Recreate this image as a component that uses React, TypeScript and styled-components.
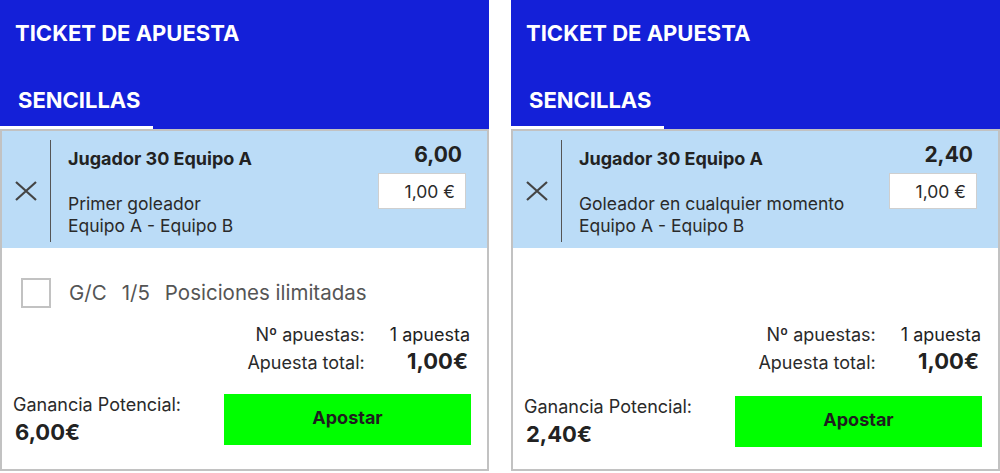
import React from "react";
import styled, { createGlobalStyle } from "styled-components";

const GlobalStyle = createGlobalStyle`
  html, body {
    margin: 0;
    padding: 0;
    background: #ffffff;
  }
  body {
    font-family: Inter, "Noto Sans", "Liberation Sans", sans-serif;
    color: #222222;
  }
  * { box-sizing: border-box; }
`;

const Page = styled.div`
  display: flex;
  gap: 22px;
  width: 1000px;
  height: 473px;
`;

const Panel = styled.section`
  width: 489px;
  display: flex;
  flex-direction: column;
`;

const Header = styled.header`
  background: #1420d8;
  display: flex;
  flex-direction: column;
  height: 129px;
`;

const Title = styled.h1`
  margin: 0;
  padding: 22px 15px 0;
  font-size: 22px;
  line-height: 22px;
  font-weight: 700;
  color: #ffffff;
`;

const Tab = styled.div`
  margin-top: 45px;
  width: 153px;
  padding: 0 0 15px 18px;
  border-bottom: 3px solid #ffffff;
  font-size: 22px;
  line-height: 22px;
  font-weight: 700;
  color: #ffffff;
`;

const Body = styled.div`
  height: 342px;
  border: 2px solid #c2c2c2;
  display: flex;
  flex-direction: column;
`;

const SelectionRow = styled.div`
  height: 117px;
  background: #bbdcf7;
  display: flex;
  flex-shrink: 0;
`;

const RemoveCell = styled.div`
  width: 48px;
  padding-top: 3px;
  display: flex;
  align-items: center;
  justify-content: center;
`;

const Divider = styled.div`
  width: 1px;
  margin: 9px 0 6px;
  background: #555555;
`;

const SelectionContent = styled.div`
  flex: 1;
  display: flex;
  justify-content: space-between;
  padding: 0 21px 0 17px;
`;

const SelectionInfo = styled.div`
  display: flex;
  flex-direction: column;
  padding-top: 17px;
`;

const PlayerName = styled.div`
  font-size: 18px;
  line-height: 22px;
  font-weight: 700;
  color: #222222;
`;

const Market = styled.div`
  margin-top: 23px;
  font-size: 17.5px;
  line-height: 22px;
  color: #2a2a2a;
`;

const EventName = styled.div`
  font-size: 17.5px;
  line-height: 22px;
  color: #2a2a2a;
`;

const OddsColumn = styled.div`
  display: flex;
  flex-direction: column;
  align-items: flex-end;
  padding-top: 12px;
`;

const Odds = styled.div`
  font-size: 21px;
  line-height: 24px;
  font-weight: 700;
  color: #222222;
  margin-right: 4px;
`;

const StakeInput = styled.input`
  margin-top: 6px;
  width: 88px;
  height: 36px;
  border: 1px solid #cfcfcf;
  background: #ffffff;
  padding: 0 10px 0 0;
  text-align: right;
  font-family: inherit;
  font-size: 17.5px;
  color: #2a2a2a;
  outline: none;
`;

const Options = styled.div`
  flex: 1;
  display: flex;
  align-items: flex-start;
  padding: 30px 0 0 19px;
  gap: 18px;
`;

const CheckBox = styled.span`
  width: 30px;
  height: 30px;
  border: 2px solid #c2c2c2;
  background: #ffffff;
  flex-shrink: 0;
`;

const OptionLabels = styled.div`
  display: flex;
  gap: 15px;
  font-size: 20.5px;
  line-height: 30px;
  color: #555555;
`;

const Spacer = styled.div`
  flex: 1;
`;

const Summary = styled.div`
  display: grid;
  grid-template-columns: auto auto;
  grid-auto-rows: 27px;
  justify-content: end;
  column-gap: 25px;
  align-items: baseline;
  padding-right: 17px;
`;

const SummaryLabel = styled.div`
  text-align: right;
  font-size: 18px;
  line-height: 27px;
  color: #2a2a2a;
`;

const SummaryValue = styled.div<{ $strong?: boolean }>`
  text-align: right;
  font-size: ${(p) => (p.$strong ? "22px" : "18px")};
  font-weight: ${(p) => (p.$strong ? 700 : 400)};
  line-height: 27px;
  color: #222222;
  padding-right: ${(p) => (p.$strong ? "2px" : "0")};
`;

const Footer = styled.div<{ $lower?: boolean }>`
  margin-top: ${(p) => (p.$lower ? "21px" : "19px")};
  padding: 0 16px ${(p) => (p.$lower ? "22px" : "24px")} 11px;
  display: flex;
  justify-content: space-between;
  align-items: flex-start;
`;

const Gain = styled.div`
  display: flex;
  flex-direction: column;
`;

const GainLabel = styled.div`
  font-size: 18px;
  line-height: 22px;
  color: #2a2a2a;
`;

const GainValue = styled.div`
  margin-top: 3px;
  margin-left: 2px;
  font-size: 22px;
  line-height: 26px;
  font-weight: 700;
  color: #222222;
`;

const BetButton = styled.button`
  width: 247px;
  height: 51px;
  border: none;
  background: #00ff00;
  font-family: inherit;
  font-size: 18px;
  font-weight: 700;
  color: #1e1e1e;
  padding: 0 0 4px;
  cursor: pointer;
`;

const CloseIcon = () => (
  <svg width="22" height="20" viewBox="0 0 22 20" fill="none">
    <path d="M1 1L21 19M21 1L1 19" stroke="#444444" strokeWidth="2.2" />
  </svg>
);

type TicketProps = {
  odds: string;
  market: string;
  gain: string;
  showOptions?: boolean;
};

const Ticket = ({ odds, market, gain, showOptions }: TicketProps) => (
  <Panel>
    <Header>
      <Title>TICKET DE APUESTA</Title>
      <Tab>SENCILLAS</Tab>
    </Header>
    <Body>
      <SelectionRow>
        <RemoveCell>
          <CloseIcon />
        </RemoveCell>
        <Divider />
        <SelectionContent>
          <SelectionInfo>
            <PlayerName>Jugador 30 Equipo A</PlayerName>
            <Market>{market}</Market>
            <EventName>Equipo A - Equipo B</EventName>
          </SelectionInfo>
          <OddsColumn>
            <Odds>{odds}</Odds>
            <StakeInput readOnly value="1,00 €" />
          </OddsColumn>
        </SelectionContent>
      </SelectionRow>
      {showOptions ? (
        <Options>
          <CheckBox />
          <OptionLabels>
            <span>G/C</span>
            <span>1/5</span>
            <span>Posiciones ilimitadas</span>
          </OptionLabels>
        </Options>
      ) : (
        <Spacer />
      )}
      <Summary>
        <SummaryLabel>Nº apuestas:</SummaryLabel>
        <SummaryValue>1 apuesta</SummaryValue>
        <SummaryLabel>Apuesta total:</SummaryLabel>
        <SummaryValue $strong>1,00€</SummaryValue>
      </Summary>
      <Footer $lower={!showOptions}>
        <Gain>
          <GainLabel>Ganancia Potencial:</GainLabel>
          <GainValue>{gain}</GainValue>
        </Gain>
        <BetButton>Apostar</BetButton>
      </Footer>
    </Body>
  </Panel>
);

export default function App() {
  return (
    <>
      <GlobalStyle />
      <Page>
        <Ticket odds="6,00" market="Primer goleador" gain="6,00€" showOptions />
        <Ticket odds="2,40" market="Goleador en cualquier momento" gain="2,40€" />
      </Page>
    </>
  );
}
